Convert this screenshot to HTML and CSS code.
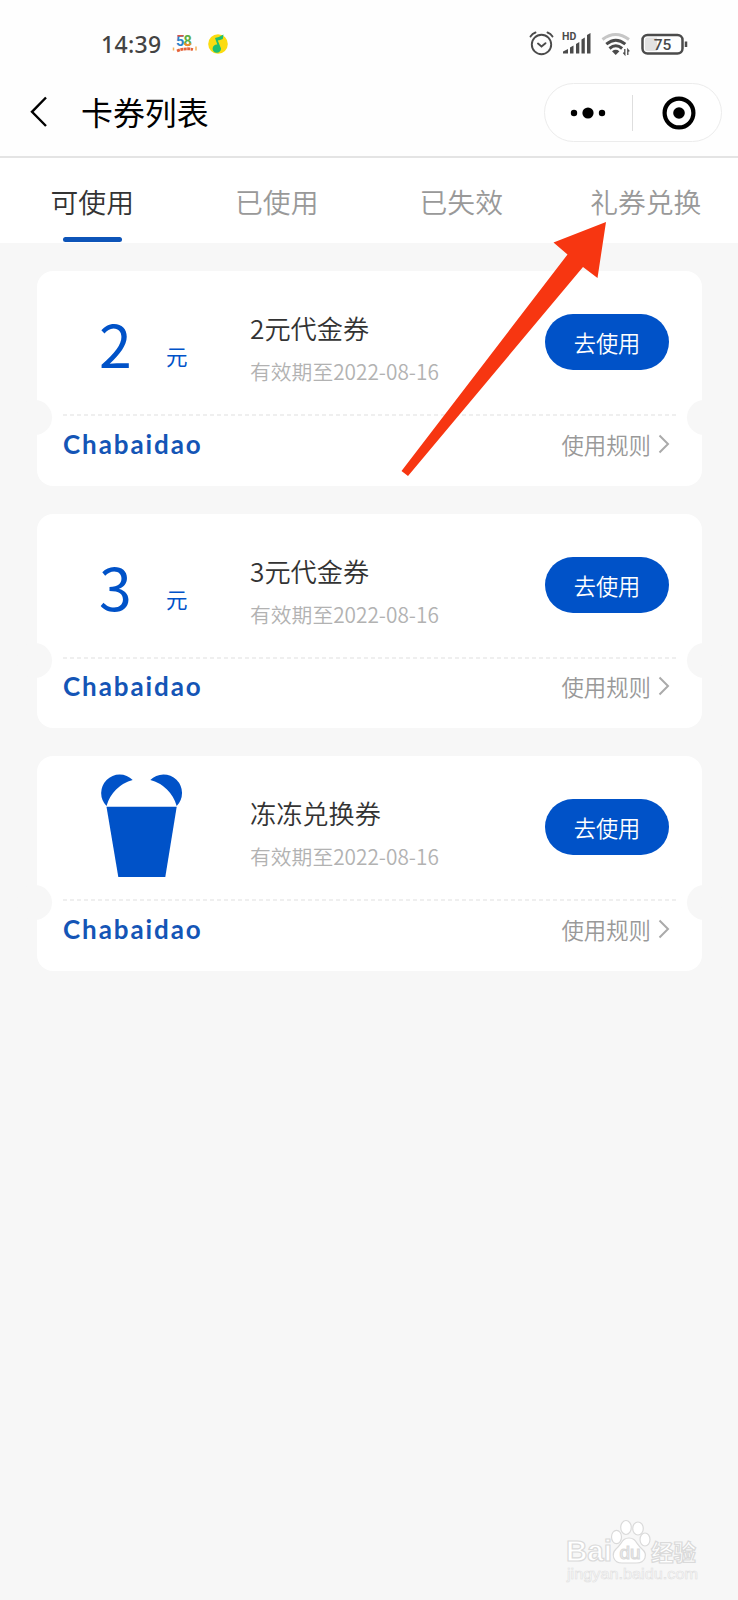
FILE: index.html
```html
<!DOCTYPE html>
<html lang="zh-CN">
<head>
<meta charset="utf-8">
<title>卡券列表</title>
<link rel="stylesheet" href="styles.css">
</head>
<body>
<div class="page">
  <div class="status">
    <span class="time">14:39</span>
    <svg class="ic58" width="26" height="26" viewBox="0 -4 26 26">
      <text x="4" y="11" class="n5">5</text><text x="11.500" y="11" class="n8">8</text>
      <path d="M5.500 .8h6" stroke="#e7503c" stroke-width="1.500"/>
      <path d="M12.500 8.500q3.500 3.500 6.500 0" stroke="#f08a2c" stroke-width="1.800" fill="none"/>
      <path d="M1.500 12.500v3M24 11.500v4" stroke="#f3b45a" stroke-width="1.500"/>
      <path d="M5 16q8-3.500 16-1.500" stroke="#e5633a" stroke-width="2.800" fill="none" stroke-dasharray="3 .5"/>
    </svg>
    <svg class="music" width="20" height="20" viewBox="0 0 20 20">
      <circle cx="10" cy="10" r="9.800" fill="#fbdc10"/>
      <path d="M7 4Q12 3 15.500.6L14.800 5Q12 6.300 9.800 6.600L13 14.500A4.200 4.200 0 1 1 9.300 10.500Z" fill="#1fbf72"/>
    </svg>
    <svg class="signals" width="160" height="30" viewBox="0 0 160 30" fill="none" stroke="#4b4b4b">
      <g stroke-width="1.900" stroke-linecap="round">
        <circle cx="12.500" cy="15.500" r="9.700"/>
        <path d="M9 14.500l3.500 3 4-3.300M1.500 7.500q1.800-3 5-4M18.500 3.500q3.200 1 5 4"/>
      </g>
      <text x="33" y="11" class="hd">HD</text>
      <g fill="#4b4b4b" stroke="none">
        <path d="M34 24.500v-2l5-2.500v4.500zM41 24.500v-6l3.500-2v8zM47 24.500v-9.500l3.300-2v11.500zM52.500 24.500v-14l3.300-2v16zM58 24.500v-18.500l3.500-2v20.500z"/>
        <path d="M83 22.200q3.700-2.800 7.400 0l-3.700 3.900z"/>
      </g>
      <path d="M73.500 10.500q13-10 26.500 0" stroke="#c6c6c6" stroke-width="3"/>
      <path d="M77.300 15.200q9.500-8 19 0M80.500 19.500q6.300-5.400 12.600 0" stroke-width="3"/>
      <path d="M95.800 20v5.500l-1.500-1.800M98.800 26v-5.500l1.500 1.800" stroke-width="1.300"/>
      <rect x="113.500" y="6" width="40" height="18.500" rx="5" stroke-width="2.500"/>
      <path d="M118 8.500h10v13.500h-10q-2 0-2-2v-9.500q0-2 2-2z" fill="#e2e2e2" stroke="none"/>
      <path d="M157 12.500v5.500" stroke-width="2.500"/>
      <text x="133.500" y="20.700" class="pct">75</text>
    </svg>
  </div>
  <header class="nav">
    <svg class="back" width="18" height="32" viewBox="0 0 18 32"><path d="M17 1.500L3 15.800 17 30" fill="none" stroke="#000" stroke-width="2.400"/></svg>
    <h1 class="heading">卡券列表</h1>
    <div class="capsule">
      <svg class="dots" width="36" height="12" viewBox="0 0 36 12"><circle cx="4" cy="6" r="3.200"/><circle cx="18" cy="6" r="5.600"/><circle cx="32" cy="6" r="3.200"/></svg>
      <span class="split"></span>
      <svg class="target" width="34" height="34" viewBox="0 0 34 34"><circle cx="17" cy="17" r="14.400" fill="none" stroke="#000" stroke-width="4.200"/><circle cx="17" cy="17" r="5.800"/></svg>
    </div>
  </header>
  <nav class="tabs">
    <span class="tab active">可使用</span>
    <span class="tab">已使用</span>
    <span class="tab">已失效</span>
    <span class="tab">礼券兑换</span>
  </nav>
  <main class="list">
    <section class="card">
      <div class="top">
        <div class="value"><span class="num">2</span><span class="unit">元</span></div>
        <div class="info"><div class="name">2元代金券</div><div class="date">有效期至2022-08-16</div></div>
        <span class="use">去使用</span>
      </div>
      <div class="bottom"><span class="brand">Chabaidao</span><span class="rules">使用规则<svg width="12" height="20" viewBox="0 0 12 20"><path d="M1.500 1.500l8.500 8.500-8.500 8.500"/></svg></span></div>
    </section>
    <section class="card">
      <div class="top">
        <div class="value"><span class="num">3</span><span class="unit">元</span></div>
        <div class="info"><div class="name">3元代金券</div><div class="date">有效期至2022-08-16</div></div>
        <span class="use">去使用</span>
      </div>
      <div class="bottom"><span class="brand">Chabaidao</span><span class="rules">使用规则<svg width="12" height="20" viewBox="0 0 12 20"><path d="M1.500 1.500l8.500 8.500-8.500 8.500"/></svg></span></div>
    </section>
    <section class="card">
      <div class="top">
        <div class="value"><svg class="cup" width="86" height="104" viewBox="0 0 86 104" fill="#0052c8">
          <path d="M7.500 32A18.200 18.200 0 0 1 33.700 6A37 37 0 0 0 7.500 32Z"/>
          <path d="M77.700 32A18.200 18.200 0 0 0 51.300 6A37 37 0 0 1 77.700 32Z"/>
          <path d="M7.500 32.700H77.700L66.300 103H19.300Z"/>
        </svg></div>
        <div class="info"><div class="name">冻冻兑换券</div><div class="date">有效期至2022-08-16</div></div>
        <span class="use">去使用</span>
      </div>
      <div class="bottom"><span class="brand">Chabaidao</span><span class="rules">使用规则<svg width="12" height="20" viewBox="0 0 12 20"><path d="M1.500 1.500l8.500 8.500-8.500 8.500"/></svg></span></div>
    </section>
  </main>
  <svg class="arrow" width="206" height="254" viewBox="0 0 206 254"><path d="M205 0L152.500 20.500 166.500 32.500 0.500 249 7 254 182 45 196.500 56Z" fill="#f73611"/></svg>
  <svg class="mark" width="140" height="70" viewBox="0 0 140 70">
    <g fill="#fff" stroke="#dadada" stroke-width="1.200">
      <text x="4" y="42" class="bai" textLength="46" lengthAdjust="spacingAndGlyphs">Bai</text>
      <ellipse cx="54.500" cy="18" rx="5" ry="6.700"/>
      <ellipse cx="64" cy="8.500" rx="5.300" ry="7"/>
      <ellipse cx="76" cy="9.500" rx="5.300" ry="6.500"/>
      <ellipse cx="83" cy="20.500" rx="5" ry="6.500"/>
      <path d="M67 19C60 19 60 25 54 30C49 35 51 44 60 44H74C84 44 86 35 80 30C74 25 74 19 67 19Z"/>
      <text x="57.500" y="40" class="du">du</text>
      <text x="89" y="41.500" class="jy">经验</text>
      <text x="5" y="60" class="url" textLength="131" lengthAdjust="spacingAndGlyphs">jingyan.baidu.com</text>
    </g>
  </svg>
</div>
</body>
</html>
```
FILE: styles.css
```css
* { box-sizing: border-box; }
body { margin: 0; background: #f7f7f7; font-family: "Noto Sans CJK SC", sans-serif; }
.page { position: relative; width: 738px; height: 1600px; overflow: hidden; }
.status { height: 70px; padding: 18px 49px 0 101px; display: flex; align-items: center; background: #fefefe; }
.time { font: 500 23px/30px "Noto Sans", sans-serif; letter-spacing: .3px; color: #434343; }
.ic58 { margin-left: 11px; overflow: visible; }
.n5, .n8 { font: 700 14.500px Roboto, sans-serif; fill: #2c82c9; }
.n8 { fill: #5fae42; }
.music { margin-left: 10px; }
.signals { margin-left: auto; }
.hd { font: 700 10.500px Roboto, sans-serif; fill: #4b4b4b; stroke: none; }
.pct { font: 500 15.500px Roboto, sans-serif; fill: #4b4b4b; stroke: none; text-anchor: middle; }
.nav { height: 88px; padding: 13px 16px 0 29px; display: flex; align-items: flex-start; background: #fefefe; border-bottom: 2px solid #e4e4e4; }
.back { margin-top: 13px; }
.heading { margin: 5px 0 0 34px; font-size: 31.900px; line-height: 46px; font-weight: 400; color: #000; }
.capsule { margin-left: auto; width: 178px; height: 59px; border: 1px solid #ececec; border-radius: 30px; display: flex; align-items: center; padding: 0 25px 0 25px; background: #fff; }
.split { width: 1px; height: 36px; margin-left: 26px; background: #dedede; }
.target { margin-left: auto; }
.tabs { height: 85px; display: grid; grid-template-columns: repeat(4, 1fr); background: #fff; }
.tab { display: flex; flex-direction: column; align-items: center; padding-top: 23px; font-size: 27.800px; line-height: 40px; font-weight: 350; color: #999; }
.active { color: #333; }
.active::after { content: ""; width: 59px; height: 5px; margin-top: 16px; border-radius: 3px; background: #0d54b8; }
.list { padding: 28px 36px 0 37px; display: flex; flex-direction: column; gap: 28px; }
.card { position: relative; height: 214.500px; padding: 0 26px; border-radius: 16px; background: #fff; }
.card::before, .card::after { content: ""; position: absolute; top: 129px; left: -20px; width: 35px; height: 35px; border-radius: 50%; background: #f7f7f7; }
.card::after { left: auto; right: -20px; }
.top { height: 145px; display: flex; align-items: flex-start; background: repeating-linear-gradient(90deg, #efefef 0 4px, transparent 4px 7px) left bottom / 100% 2px no-repeat; }
.value { width: 187px; padding-left: 36px; display: flex; align-items: flex-start; color: #0052c8; }
.num { font-size: 59px; line-height: 88px; margin-top: 28px; width: 67px; font-weight: 400; }
.unit { font-size: 21.500px; line-height: 32px; margin-top: 69px; }
.cup { margin-top: 18px; }
.info { flex: 1; font-weight: 350; }
.name { margin-top: 37px; font-size: 26.200px; line-height: 40px; color: #333; }
.date { margin-top: 8px; font-size: 20.800px; line-height: 30px; color: #b2b2b2; }
.use { width: 124px; height: 56px; margin: 43px 7px 0 0; border-radius: 28px; background: #0052c8; color: #fff; font-size: 22.200px; font-weight: 350; line-height: 57px; text-align: center; }
.bottom { height: 55px; display: flex; align-items: center; justify-content: space-between; padding-right: 6px; }
.brand { font: 700 26px/30px Lato, sans-serif; letter-spacing: 1.900px; color: #1455b6; }
.rules { display: flex; align-items: center; gap: 7px; font-size: 22.400px; font-weight: 350; color: #999; }
.rules path { fill: none; stroke: #aaa; stroke-width: 2; }
.arrow { position: absolute; left: 401px; top: 222px; }
.mark { position: absolute; left: 562px; top: 1519px; overflow: visible; }
.bai { font: 700 30px "Liberation Sans", sans-serif; }
.du { font: 400 19px "Liberation Sans", sans-serif; }
.jy { font: 700 22.500px "Noto Sans CJK SC", sans-serif; }
.url { font: 400 15px "Liberation Sans", sans-serif; stroke: #e0e0e0; stroke-width: .6px; }
```
